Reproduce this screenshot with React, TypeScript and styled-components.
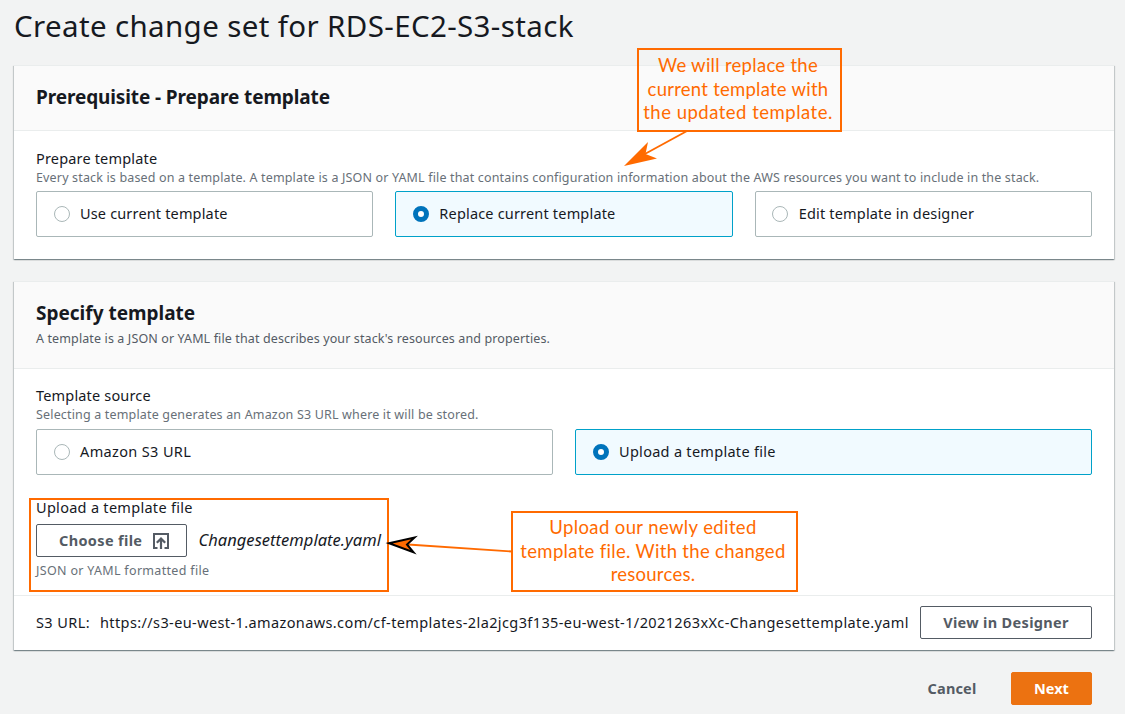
import React from 'react';
import styled, { createGlobalStyle } from 'styled-components';

const GlobalStyle = createGlobalStyle`
  * { box-sizing: border-box; }
  body {
    margin: 0;
    background: #f2f3f3;
    color: #16191f;
    font-family: 'Noto Sans', 'Open Sans', sans-serif;
    font-size: 15px;
    line-height: 22px;
  }
`;

const Page = styled.main`
  position: relative;
  width: 1125px;
  height: 714px;
  padding: 6px 11px 0 14px;
  overflow: hidden;
`;

const Title = styled.h1`
  margin: 0 0 20px;
  font-size: 29.5px;
  font-weight: 400;
  line-height: 39px;
  letter-spacing: 0.37px;
  white-space: nowrap;
`;

const Card = styled.section`
  margin-bottom: 22px;
  background: #fff;
  border-top: 1px solid #eaeded;
  box-shadow: 0 1px 1px 0 rgba(0, 28, 36, 0.3), 1px 1px 1px 0 rgba(0, 28, 36, 0.15),
    -1px 1px 1px 0 rgba(0, 28, 36, 0.15);
`;

const CardHeader = styled.header<{ $height: number }>`
  height: ${(p) => p.$height}px;
  padding: 17px 22px 0;
  background: #fafafa;
  border-bottom: 1px solid #eaeded;
`;

const CardTitle = styled.h2<{ $ls?: number }>`
  margin: 0;
  font-size: 19px;
  font-weight: 700;
  line-height: 28px;
  letter-spacing: ${(p) => p.$ls ?? 0}px;
  white-space: nowrap;
`;

const CardBody = styled.div<{ $height: number; $top: number }>`
  height: ${(p) => p.$height}px;
  padding: ${(p) => p.$top}px 22px 0;
`;

const Label = styled.div<{ $ls?: number }>`
  font-size: 14.5px;
  line-height: 22px;
  letter-spacing: ${(p) => p.$ls ?? 0}px;
  white-space: nowrap;
`;

const Hint = styled.div<{ $ls?: number; $dark?: boolean; $top?: number }>`
  margin-top: ${(p) => p.$top ?? 0}px;
  color: ${(p) => (p.$dark ? '#545b64' : '#687078')};
  font-size: 12.5px;
  line-height: 16px;
  letter-spacing: ${(p) => p.$ls ?? 0}px;
  white-space: nowrap;
`;

const Tiles = styled.div<{ $columns: number; $top: number }>`
  display: grid;
  grid-template-columns: repeat(${(p) => p.$columns}, 1fr);
  gap: 22px;
  margin-top: ${(p) => p.$top}px;
`;

const Tile = styled.label<{ $selected?: boolean }>`
  display: flex;
  align-items: center;
  height: 46px;
  padding: 0 16.5px;
  gap: 10.5px;
  border: 1px solid ${(p) => (p.$selected ? '#00a1c9' : '#aab7b8')};
  border-radius: 2px;
  background: ${(p) => (p.$selected ? '#f1faff' : '#fff')};
`;

const TileText = styled(Label)`
  padding-bottom: 2px;
`;

const Radio = styled.span<{ $selected?: boolean }>`
  flex: none;
  width: 16px;
  height: 16px;
  border: ${(p) => (p.$selected ? '5px solid #0073bb' : '1px solid #aab7b8')};
  border-radius: 50%;
  background: #fff;
`;

const UploadField = styled.div`
  margin-top: 21px;
`;

const FileRow = styled.div`
  display: flex;
  align-items: center;
  gap: 11.5px;
  margin: 6px 0 6px;
`;

const Button = styled.button<{ $kind?: 'outline' | 'link' | 'primary'; $width: number; $ls?: number }>`
  display: flex;
  align-items: center;
  justify-content: center;
  flex: none;
  gap: 10.5px;
  width: ${(p) => p.$width}px;
  height: 33px;
  padding: 0 0 2px;
  border: 1px solid
    ${(p) => (p.$kind === 'primary' ? '#ec7211' : p.$kind === 'link' ? 'transparent' : '#545b64')};
  border-radius: 2px;
  background: ${(p) => (p.$kind === 'primary' ? '#ec7211' : p.$kind === 'link' ? 'transparent' : '#fff')};
  color: ${(p) => (p.$kind === 'primary' ? '#fff' : '#545b64')};
  font: 700 14.5px/22px 'Noto Sans', 'Open Sans', sans-serif;
  letter-spacing: ${(p) => p.$ls ?? 0}px;
  white-space: nowrap;

  svg {
    margin-top: 2px;
  }
`;

const FileButton = styled(Button)`
  justify-content: flex-start;
  padding-left: 22px;
`;

const FileName = styled.em<{ $ls?: number }>`
  padding-bottom: 2px;
  font-size: 16.5px;
  letter-spacing: ${(p) => p.$ls ?? 0}px;
`;

const UrlBar = styled.footer`
  display: flex;
  align-items: center;
  height: 55px;
  padding: 0 22px 1px;
  border-top: 1px solid #eaeded;
  white-space: nowrap;
  font-size: 14.5px;
`;

const UrlKey = styled.span`
  width: 64px;
  padding-bottom: 2px;
  letter-spacing: 0.4px;
`;

const UrlValue = styled.span<{ $ls?: number }>`
  flex: 1;
  padding-bottom: 2px;
  letter-spacing: ${(p) => p.$ls ?? 0}px;
`;

const Actions = styled.div`
  display: flex;
  justify-content: flex-end;
  gap: 10px;
  padding-right: 22px;
`;

const Highlight = styled.div`
  position: absolute;
  left: 29px;
  top: 498px;
  width: 360px;
  height: 94px;
  border: 2px solid #ff6a00;
`;

const Note = styled.div<{ $x: number; $y: number; $w: number; $h: number; $top: number }>`
  position: absolute;
  left: ${(p) => p.$x}px;
  top: ${(p) => p.$y}px;
  width: ${(p) => p.$w}px;
  height: ${(p) => p.$h}px;
  padding: ${(p) => p.$top}px 3px 0 0;
  border: 2px solid #ff6a00;
  color: #ff6a00;
  font-family: Lato, sans-serif;
  font-size: 18.5px;
  line-height: 23.5px;
  text-align: center;
  white-space: nowrap;
`;

const NoteLine = styled.div<{ $ls?: number }>`
  letter-spacing: ${(p) => p.$ls ?? 0}px;
`;

const Arrows = styled.svg`
  position: absolute;
  left: 0;
  top: 0;
  pointer-events: none;
`;

const UploadIcon = () => (
  <svg width="16" height="16" viewBox="0 0 16 16" fill="none" stroke="#545b64" strokeWidth="2">
    <path d="M4.500 15H1V1h14v14h-3.500" />
    <path d="M8 16V6M3.800 9.800L8 5.600l4.200 4.200" strokeWidth="2.200" />
  </svg>
);

const Option = ({ text, ls, selected }: { text: string; ls?: number; selected?: boolean }) => (
  <Tile $selected={selected}>
    <Radio $selected={selected} />
    <TileText as="span" $ls={ls}>{text}</TileText>
  </Tile>
);

export default function App() {
  return (
    <>
      <GlobalStyle />
      <Page>
        <Title>Create change set for RDS-EC2-S3-stack</Title>

        <Card>
          <CardHeader $height={65}>
            <CardTitle $ls={-0.11}>Prerequisite - Prepare template</CardTitle>
          </CardHeader>
          <CardBody $height={128} $top={16}>
            <Label $ls={0.17}>Prepare template</Label>
            <Hint $ls={0.157} $top={1}>
              Every stack is based on a template. A template is a JSON or YAML file that contains configuration
              information about the AWS resources you want to include in the stack.
            </Hint>
            <Tiles $columns={3} $top={5}>
              <Option text="Use current template" ls={0.16} />
              <Option text="Replace current template" ls={0.18} selected />
              <Option text="Edit template in designer" ls={0.18} />
            </Tiles>
          </CardBody>
        </Card>

        <Card>
          <CardHeader $height={87}>
            <CardTitle>Specify template</CardTitle>
            <Hint $dark $ls={0.12} $top={4}>
              A template is a JSON or YAML file that describes your stack's resources and properties.
            </Hint>
          </CardHeader>
          <CardBody $height={226} $top={15}>
            <Label $ls={0.17}>Template source</Label>
            <Hint $ls={0.165} $top={1}>Selecting a template generates an Amazon S3 URL where it will be stored.</Hint>
            <Tiles $columns={2} $top={6}>
              <Option text="Amazon S3 URL" ls={0.36} />
              <Option text="Upload a template file" ls={0.29} selected />
            </Tiles>
            <UploadField>
              <Label $ls={0.29}>Upload a template file</Label>
              <FileRow>
                <FileButton $width={151} $ls={0.35}>
                  Choose file
                  <UploadIcon />
                </FileButton>
                <FileName $ls={0.03}>Changesettemplate.yaml</FileName>
              </FileRow>
              <Hint $ls={0.32}>JSON or YAML formatted file</Hint>
            </UploadField>
          </CardBody>
          <UrlBar>
            <UrlKey>S3 URL:</UrlKey>
            <UrlValue $ls={0.39}>
              https://s3-eu-west-1.amazonaws.com/cf-templates-2la2jcg3f135-eu-west-1/2021263xXc-Changesettemplate.yaml
            </UrlValue>
            <Button $width={172} $ls={0.33}>View in Designer</Button>
          </UrlBar>
        </Card>

        <Actions>
          <Button $kind="link" $width={98} $ls={0.15}>Cancel</Button>
          <Button $kind="primary" $width={81}>Next</Button>
        </Actions>

        <Highlight />
        <Note $x={637} $y={48} $w={205} $h={84} $top={4}>
          <NoteLine $ls={0.28}>We will replace the</NoteLine>
          <NoteLine $ls={0.25}>current template with</NoteLine>
          <NoteLine $ls={0.5}>the updated template.</NoteLine>
        </Note>
        <Note $x={511} $y={511} $w={287} $h={81} $top={3}>
          <NoteLine $ls={0.38}>Upload our newly edited</NoteLine>
          <NoteLine $ls={0.32}>template file. With the changed</NoteLine>
          <NoteLine $ls={0.25}>resources.</NoteLine>
        </Note>
        <Arrows width="1125" height="714" viewBox="0 0 1125 714">
          <path d="M687 131L643 155" stroke="#ff6a00" strokeWidth="1.8" />
          <path d="M624 166L648 142L645.500 154L657 158.500Z" fill="#ff6a00" />
          <path d="M512 551.500L408 544.500" stroke="#ff6a00" strokeWidth="1.8" />
          <path
            d="M389 543.300L414.500 537.500L407 544.500L413.500 552.300Z"
            fill="#ff6a00"
            stroke="#000"
            strokeWidth="2"
            strokeMiterlimit="6"
          />
        </Arrows>
      </Page>
    </>
  );
}
